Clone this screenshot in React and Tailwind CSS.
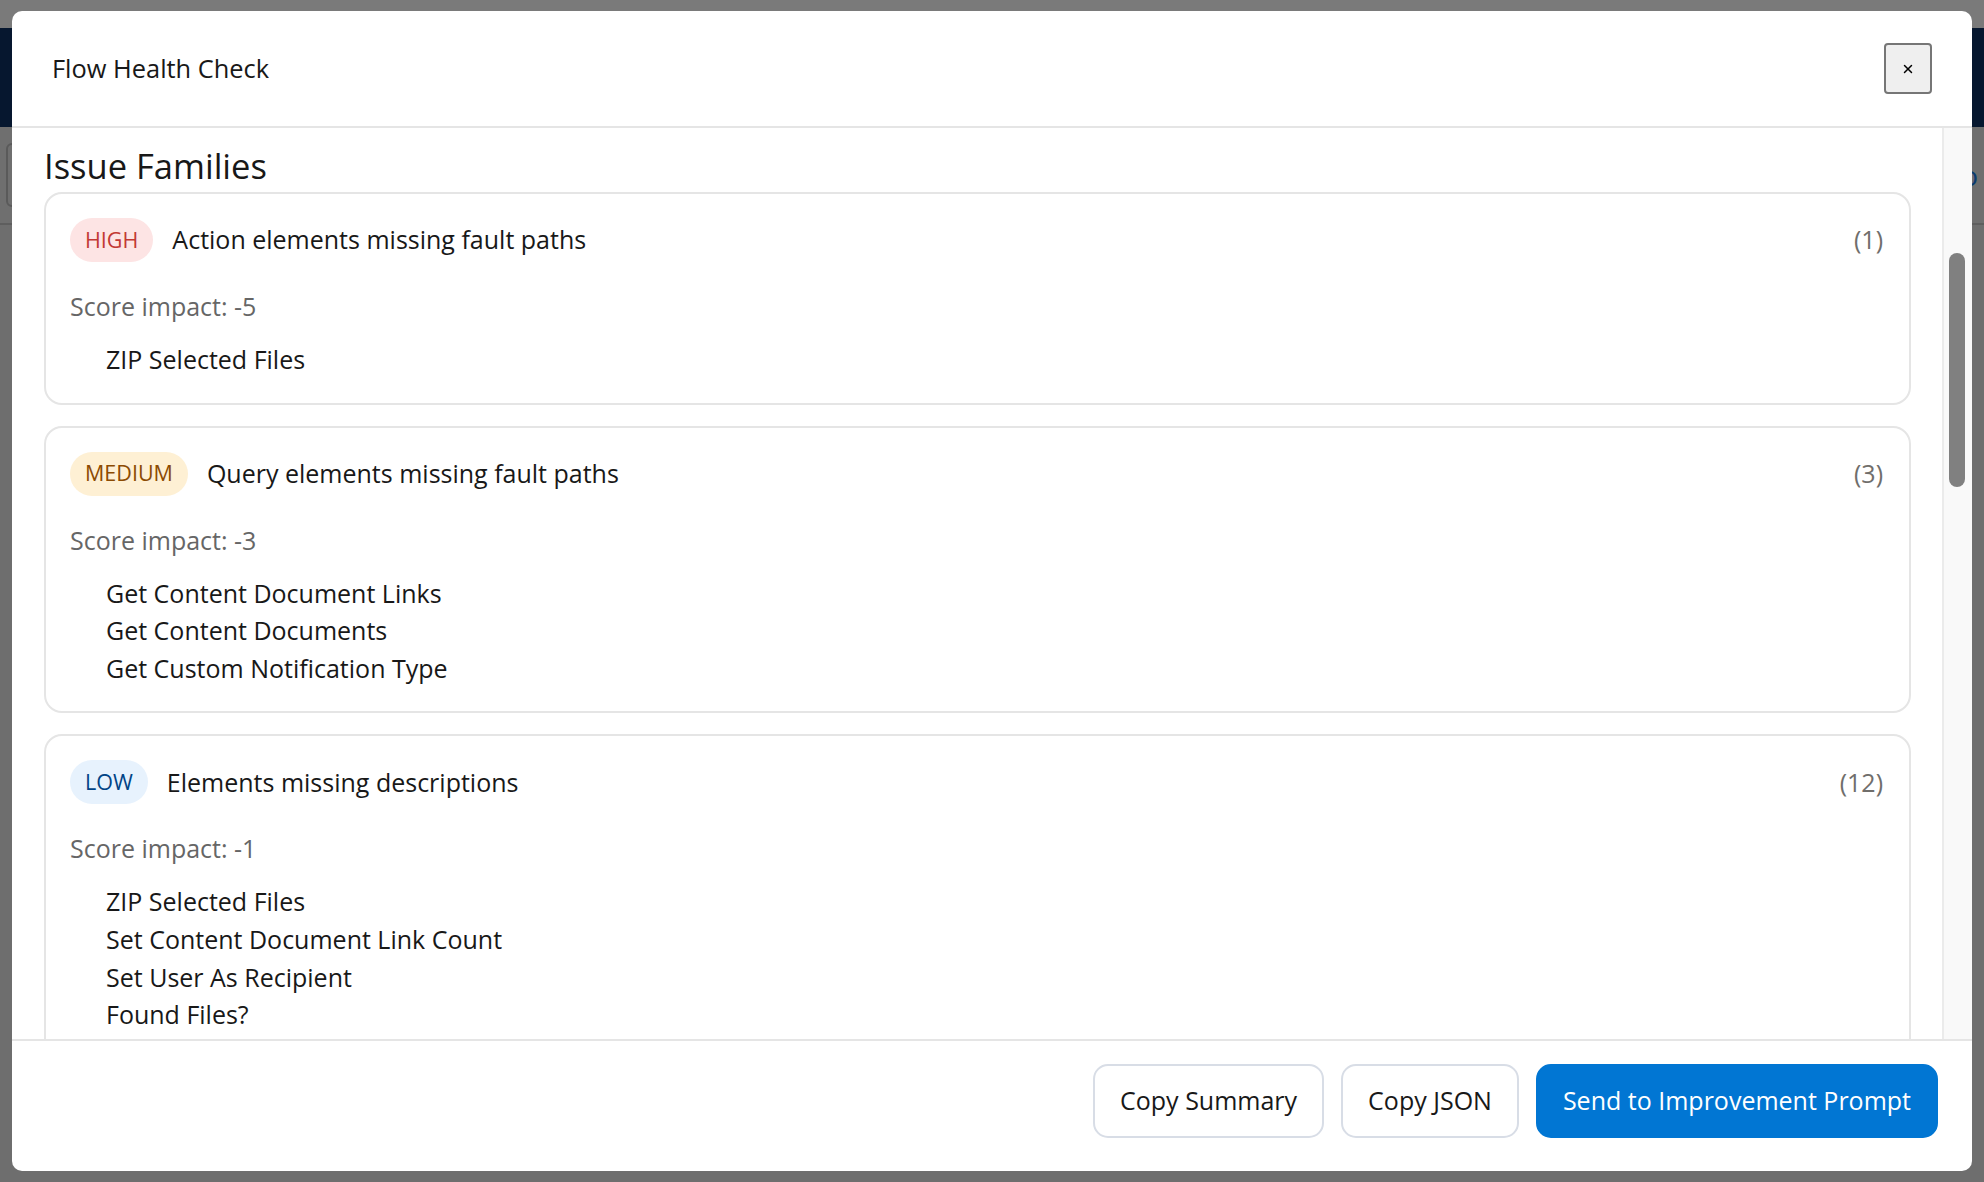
import { X } from 'lucide-react';

const families = [
  {
    level: 'HIGH',
    title: 'Action elements missing fault paths',
    count: 1,
    impact: -5,
    items: ['ZIP Selected Files'],
  },
  {
    level: 'MEDIUM',
    title: 'Query elements missing fault paths',
    count: 3,
    impact: -3,
    items: ['Get Content Document Links', 'Get Content Documents', 'Get Custom Notification Type'],
  },
  {
    level: 'LOW',
    title: 'Elements missing descriptions',
    count: 12,
    impact: -1,
    items: ['ZIP Selected Files', 'Set Content Document Link Count', 'Set User As Recipient', 'Found Files?'],
  },
];

const badgeStyles = {
  HIGH: 'bg-[#fde4e4] text-[#c23934]',
  MEDIUM: 'bg-[#fef0d4] text-[#8c4b02]',
  LOW: 'bg-[#e7f2fd] text-[#014486]',
};

function FamilyCard({ family }) {
  return (
    <div className="border-2 border-[#e5e5e5] rounded-[18px] px-[24px] pt-[24px] pb-[24px]">
      <div className="flex items-center justify-between">
        <div className="flex items-center gap-[19px]">
          <span
            className={
              'h-[44px] px-[15px] rounded-full flex items-center text-[21.5px] ' +
              badgeStyles[family.level]
            }
          >
            {family.level}
          </span>
          <span className="text-[25px] text-[#181818]">{family.title}</span>
        </div>
        <span className="text-[25px] text-[#706e6b] pr-[2px]">({family.count})</span>
      </div>
      <p className="mt-[25px] text-[25px] leading-[38px] text-[#666666]">Score impact: {family.impact}</p>
      <ul className="mt-[16px] pl-[36px] text-[25px] leading-[37.6px] text-[#181818]">
        {family.items.map((item, i) => (
          <li key={i}>{item}</li>
        ))}
      </ul>
    </div>
  );
}

export default function App() {
  return (
    <div
      className="relative h-[1182px] w-full overflow-hidden bg-[#6e6e6e]"
      style={{ fontFamily: '"Open Sans", "Liberation Sans", sans-serif' }}
    >
      {/* page behind the overlay */}
      <div className="h-[28px] bg-[#7a7a7a]" />
      <div className="h-[99px] bg-[#06172f]" />
      <div className="h-[98px] border-b-2 border-[#5e5e5e] bg-[#6f6f6f] flex items-center px-[6px]">
        <div className="h-[64px] w-[40px] rounded-[6px] border-2 border-[#5a5a5a]" />
        <div className="flex-1" />
        <span className="text-[28px] text-[#0b3b70]">o</span>
      </div>

      {/* modal */}
      <div className="absolute left-[12px] top-[11px] w-[1960px] h-[1160px] bg-white rounded-[10px] flex flex-col overflow-hidden">
        <div className="h-[117px] shrink-0 border-b-2 border-[#e5e5e5] flex items-center justify-between pl-[40px] pr-[40px]">
          <h2 className="text-[25.4px] text-[#181818]">Flow Health Check</h2>
          <button className="w-[48px] h-[51px] bg-[#efefef] border-2 border-[#767676] rounded-[4px] flex items-center justify-center text-black">
            <X size={14} strokeWidth={2.5} />
          </button>
        </div>

        <div className="flex-1 min-h-0 flex">
          <div className="flex-1 overflow-hidden pl-[32px] pr-[31px] pt-[18px]">
            <h3 className="text-[34.5px] leading-[40px] text-[#181818] mb-[6px]">Issue Families</h3>
            <div className="flex flex-col gap-[21px]">
              {families.map((f) => (
                <FamilyCard key={f.level} family={f} />
              ))}
            </div>
          </div>
          <div className="w-[30px] shrink-0 bg-[#f9f9f9] border-l-2 border-[#ebebeb]">
            <div className="mt-[125px] ml-[5px] w-[16px] h-[234px] rounded-full bg-[#808080]" />
          </div>
        </div>

        <div className="h-[132px] shrink-0 border-t-2 border-[#e5e5e5] flex items-start justify-end gap-[17px] pt-[23px] pr-[34px]">
          <button className="h-[74px] px-[25px] rounded-[15px] border-2 border-[#d8dde6] bg-white text-[25px] text-[#181818]">
            Copy Summary
          </button>
          <button className="h-[74px] px-[25px] rounded-[15px] border-2 border-[#d8dde6] bg-white text-[25px] text-[#181818]">
            Copy JSON
          </button>
          <button className="h-[74px] px-[25px] rounded-[15px] border-2 border-[#0176d3] bg-[#0176d3] text-[25px] text-white">
            Send to Improvement Prompt
          </button>
        </div>
      </div>
    </div>
  );
}
